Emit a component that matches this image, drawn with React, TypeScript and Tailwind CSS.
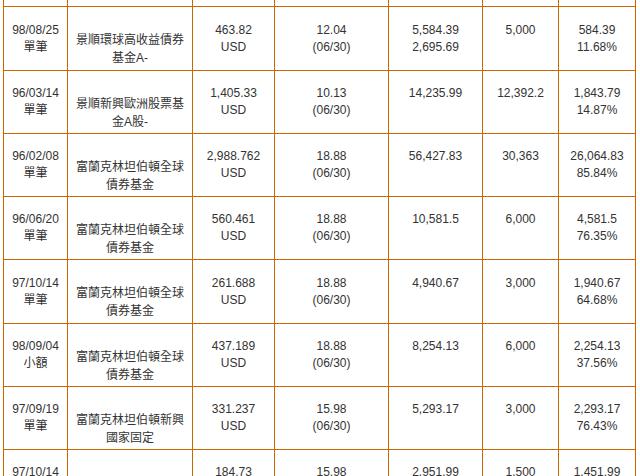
import React from "react";

type Row = {
  h: string;
  date: string;
  kind: string;
  fund: string[];
  units: string;
  cur: string;
  nav: string;
  navDate: string;
  v1: string;
  v2: string;
  cost: string;
  pl: string;
  pct: string;
};

const rows: Row[] = [
  { h: "h-[64px]", date: "98/08/25", kind: "單筆", fund: ["景順環球高收益債券", "基金A-"], units: "463.82", cur: "USD", nav: "12.04", navDate: "(06/30)", v1: "5,584.39", v2: "2,695.69", cost: "5,000", pl: "584.39", pct: "11.68%" },
  { h: "h-[63px]", date: "96/03/14", kind: "單筆", fund: ["景順新興歐洲股票基", "金A股-"], units: "1,405.33", cur: "USD", nav: "10.13", navDate: "(06/30)", v1: "14,235.99", v2: "", cost: "12,392.2", pl: "1,843.79", pct: "14.87%" },
  { h: "h-[63px]", date: "96/02/08", kind: "單筆", fund: ["富蘭克林坦伯頓全球", "債券基金"], units: "2,988.762", cur: "USD", nav: "18.88", navDate: "(06/30)", v1: "56,427.83", v2: "", cost: "30,363", pl: "26,064.83", pct: "85.84%" },
  { h: "h-[63px]", date: "96/06/20", kind: "單筆", fund: ["富蘭克林坦伯頓全球", "債券基金"], units: "560.461", cur: "USD", nav: "18.88", navDate: "(06/30)", v1: "10,581.5", v2: "", cost: "6,000", pl: "4,581.5", pct: "76.35%" },
  { h: "h-[64px]", date: "97/10/14", kind: "單筆", fund: ["富蘭克林坦伯頓全球", "債券基金"], units: "261.688", cur: "USD", nav: "18.88", navDate: "(06/30)", v1: "4,940.67", v2: "", cost: "3,000", pl: "1,940.67", pct: "64.68%" },
  { h: "h-[63px]", date: "98/09/04", kind: "小額", fund: ["富蘭克林坦伯頓全球", "債券基金"], units: "437.189", cur: "USD", nav: "18.88", navDate: "(06/30)", v1: "8,254.13", v2: "", cost: "6,000", pl: "2,254.13", pct: "37.56%" },
  { h: "h-[63px]", date: "97/09/19", kind: "單筆", fund: ["富蘭克林坦伯頓新興", "國家固定"], units: "331.237", cur: "USD", nav: "15.98", navDate: "(06/30)", v1: "5,293.17", v2: "", cost: "3,000", pl: "2,293.17", pct: "76.43%" },
  { h: "h-[63px]", date: "97/10/14", kind: "單筆", fund: ["", ""], units: "184.73", cur: "USD", nav: "15.98", navDate: "(06/30)", v1: "2,951.99", v2: "", cost: "1,500", pl: "1,451.99", pct: "" },
];

const cell = "flex items-center justify-center text-center border-r border-[#cc6600]";

function Two({ a, b }: { a: string; b: string }) {
  return (
    <div className="leading-[17px]">
      <div>{a || "\u00a0"}</div>
      <div>{b || "\u00a0"}</div>
    </div>
  );
}

export default function App() {
  return (
    <div
      className="w-[640px] h-[476px] overflow-hidden bg-white pl-[3px] text-[12px] text-[#333333]"
      style={{ fontFamily: '"Liberation Sans", Arial, "Noto Sans CJK TC", sans-serif' }}
    >
      <div className="w-[633px] border-l border-r border-[#cc6600]">
        <div className="flex h-[7px] border-b border-[#cc6600]">
          <div className={`${cell} w-[64px]`} />
          <div className={`${cell} w-[125px]`} />
          <div className={`${cell} w-[82px]`} />
          <div className={`${cell} w-[114px]`} />
          <div className={`${cell} w-[94px]`} />
          <div className={`${cell} w-[76px]`} />
          <div className="w-[76px]" />
        </div>
        {rows.map((r, i) => (
          <div key={i} className={`flex ${r.h} border-b border-[#cc6600]`}>
            <div className={`${cell} w-[64px]`}>
              <Two a={r.date} b={r.kind} />
            </div>
            <div className={`${cell} w-[125px]`}>
              <div className="pt-[21px] leading-[18px]">
                <div>{r.fund[0] || "\u00a0"}</div>
                <div>{r.fund[1] || "\u00a0"}</div>
              </div>
            </div>
            <div className={`${cell} w-[82px]`}>
              <Two a={r.units} b={r.cur} />
            </div>
            <div className={`${cell} w-[114px]`}>
              <Two a={r.nav} b={r.navDate} />
            </div>
            <div className={`${cell} w-[94px]`}>
              <Two a={r.v1} b={r.v2} />
            </div>
            <div className={`${cell} w-[76px]`}>
              <Two a={r.cost} b="" />
            </div>
            <div className="flex w-[76px] items-center justify-center text-center">
              <Two a={r.pl} b={r.pct} />
            </div>
          </div>
        ))}
      </div>
    </div>
  );
}
